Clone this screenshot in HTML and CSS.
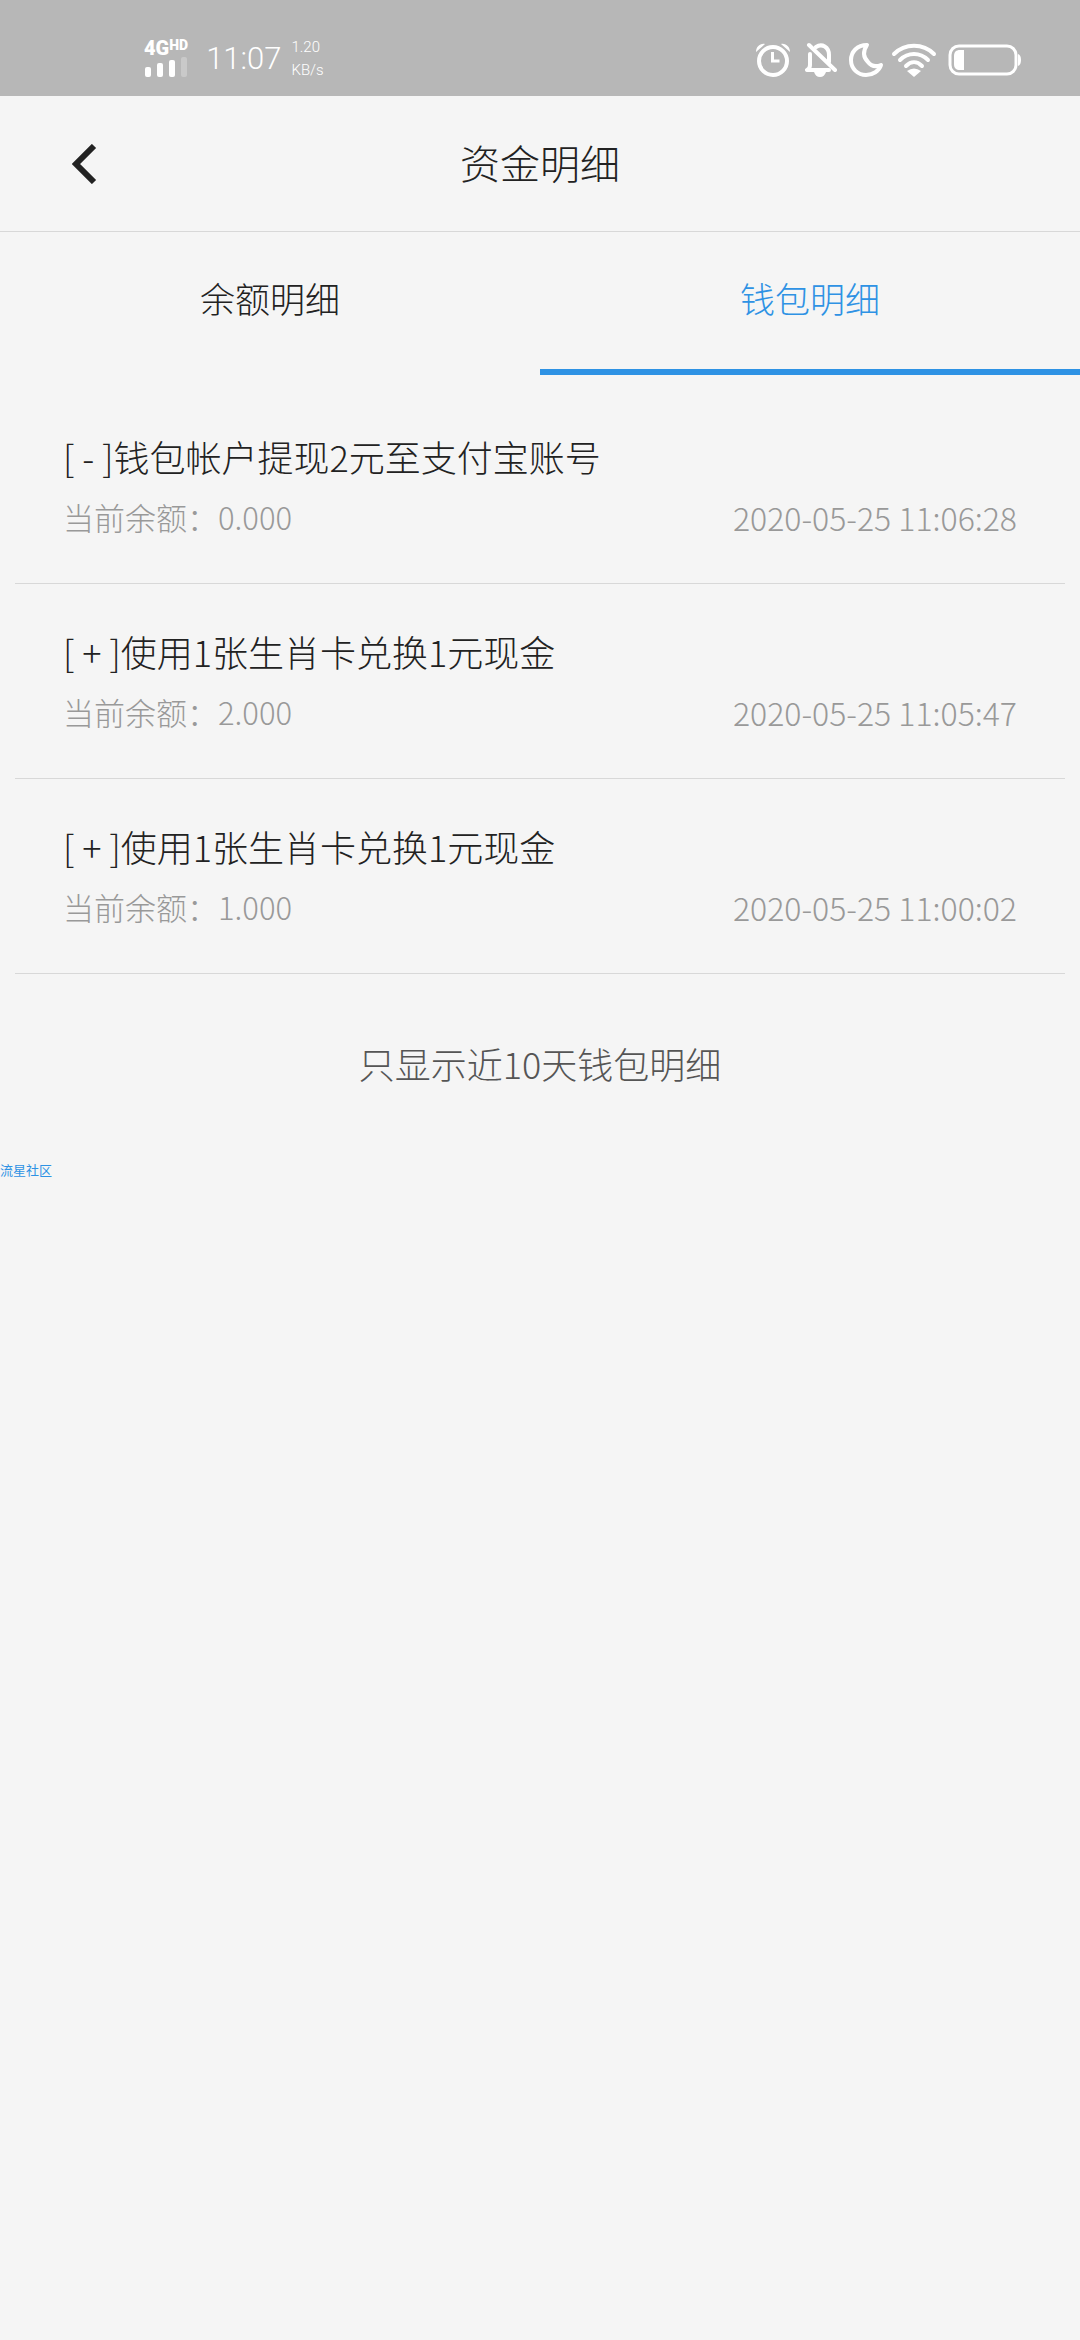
FILE: index.html
```html
<!DOCTYPE html>
<html lang="zh-CN">
<head>
    <meta charset="UTF-8">
    <meta name="viewport" content="width=device-width, initial-scale=1.0">
    <title>资金明细</title>
    <link rel="stylesheet" href="styles.css">
</head>
<body>
    <div class="status-bar">
        <div class="status-left">
            <div class="network">
                <div class="network-type">4G<sup>HD</sup></div>
                <svg class="signal" width="44" height="20" viewBox="0 0 44 20" fill="#fff">
                    <rect x="1" y="10" width="6" height="10" rx="2"/>
                    <rect x="13" y="6" width="6" height="14" rx="2"/>
                    <rect x="25" y="3" width="6" height="17" rx="2"/>
                    <rect x="37" y="0" width="6" height="20" rx="2" opacity="0.25"/>
                </svg>
            </div>
            <div class="clock">11:07</div>
            <div class="speed">
                <div>1.20</div>
                <div>KB/s</div>
            </div>
        </div>
        <div class="status-right">
            <svg width="36" height="36" viewBox="0 0 36 36" fill="none" stroke="#fff" stroke-width="4">
                <circle cx="18" cy="19" r="14"/>
                <path d="M17.500 10v9h7" stroke-width="3"/>
                <path d="M1 10C1 5 5 1 10 2L1 10zM35 10C35 5 31 1 26 2l9 8z" fill="#fff" stroke="none"/>
            </svg>
            <svg class="bell" width="32" height="36" viewBox="0 0 32 36" fill="none" stroke="#fff" stroke-width="4" stroke-linecap="round" stroke-linejoin="round">
                <path d="M11 5C17 1 24 5 24 13v7M5 12v11c0 3-1 4-3 5h22"/>
                <path d="M4 3l26 25"/>
                <path d="M9 30h12c-1 3-3 5-6 5s-5-2-6-5z" fill="#fff" stroke="none"/>
            </svg>
            <svg class="moon" width="36" height="36" viewBox="0 0 36 36" fill="none" stroke="#fff" stroke-width="4" stroke-linejoin="round">
                <path d="M19 3C9 3 3 10 3 18c0 9 7 15 15 15 7 0 13-4 15-10-5 2-10 1-13-3-5-5-5-11-1-17z"/>
            </svg>
            <svg class="wifi" width="46" height="34" viewBox="0 0 46 34" fill="none" stroke="#fff" stroke-width="4" stroke-linecap="round">
                <path d="M3 11C14 0 32 0 43 11M9 17c8-8 20-8 28 0M15 23c5-5 11-5 16 0"/>
                <path d="M16 28q7-5 14 0l-7 6z" fill="#fff" stroke="none"/>
            </svg>
            <svg class="battery" width="74" height="32" viewBox="0 0 74 32">
                <rect x="2" y="2" width="66" height="28" rx="9" fill="none" stroke="#fff" stroke-width="3"/>
                <path d="M16 6v20h-4c-4 0-6-2-6-6v-8c0-4 2-6 6-6z" fill="#fff"/>
                <path d="M70 10q3 1 3 6t-3 6z" fill="#fff"/>
            </svg>
        </div>
    </div>

    <header class="header">
        <button type="button" class="back" aria-label="返回">
            <svg width="26" height="40" viewBox="0 0 26 40" fill="none" stroke="#222" stroke-width="6">
                <path d="M22 2L4 20l18 18"/>
            </svg>
        </button>
        <h1>资金明细</h1>
    </header>

    <nav class="tabs">
        <a class="tab" href="#balance">余额明细</a>
        <a class="tab active" href="#wallet">钱包明细</a>
    </nav>

    <ul class="records">
        <li class="record">
            <div class="record-title">[ - ]钱包帐户提现2元至支付宝账号</div>
            <div class="record-info">
                <span>当前余额：0.000</span>
                <time>2020-05-25 11:06:28</time>
            </div>
        </li>
        <li class="record">
            <div class="record-title">[ + ]使用1张生肖卡兑换1元现金</div>
            <div class="record-info">
                <span>当前余额：2.000</span>
                <time>2020-05-25 11:05:47</time>
            </div>
        </li>
        <li class="record">
            <div class="record-title">[ + ]使用1张生肖卡兑换1元现金</div>
            <div class="record-info">
                <span>当前余额：1.000</span>
                <time>2020-05-25 11:00:02</time>
            </div>
        </li>
    </ul>

    <p class="tip">只显示近10天钱包明细</p>
    <a class="site-link" href="#">流星社区</a>
</body>
</html>
```
FILE: styles.css
```css
:root {
    --blue: #2e92e4;
    --bg: #f5f5f5;
    --text: #222;
    --text-secondary: #999;
    --line: #d8d8d8;
}

* {
    margin: 0;
    padding: 0;
    box-sizing: border-box;
}

body {
    background-color: var(--bg);
    color: var(--text);
    font-family: "Noto Sans CJK SC", sans-serif;
    font-weight: 300;
    min-height: 100vh;
}

a {
    text-decoration: none;
    color: inherit;
}

svg {
    display: block;
}

/* phone status bar */
.status-bar {
    display: flex;
    justify-content: space-between;
    align-items: center;
    height: 96px;
    padding: 24px 58px 0 144px;
    background-color: #b7b7b7;
    color: #fff;
    font-family: Roboto, sans-serif;
}

.status-left,
.status-right {
    display: flex;
    align-items: center;
}

.network {
    padding-bottom: 4px;
}

.network-type {
    display: flex;
    font-size: 20px;
    line-height: 18px;
    font-weight: 900;
}

.network-type sup {
    font-size: 14px;
    line-height: 12px;
}

.clock {
    margin-left: 18px;
    padding-bottom: 4px;
    font-size: 31px;
}

.speed {
    margin-left: 10px;
    padding-bottom: 2px;
    font-size: 15px;
    line-height: 23px;
}

.bell {
    margin-left: 14px;
}

.moon {
    margin-left: 11px;
}

.wifi {
    margin-left: 7px;
}

.battery {
    margin-left: 11px;
}

/* title bar */
.header {
    position: relative;
    display: flex;
    justify-content: center;
    align-items: center;
    height: 136px;
    border-bottom: 1px solid var(--line);
}

.header h1 {
    padding-bottom: 4px;
    font-size: 40px;
    font-weight: 300;
}

.back {
    position: absolute;
    left: 48px;
    padding: 24px;
    border: none;
    background: none;
    cursor: pointer;
}

.tabs {
    display: flex;
}

.tab {
    flex: 1;
    height: 143px;
    border-bottom: 6px solid transparent;
    font-size: 35px;
    line-height: 132px;
    text-align: center;
}

.tab.active {
    color: var(--blue);
    border-bottom-color: var(--blue);
}

/* record list */
.records {
    list-style: none;
    padding: 14px 15px 0;
}

.record {
    padding: 43px 48px 42px;
    border-bottom: 1px solid var(--line);
}

.record-title {
    font-size: 36px;
    line-height: 48px;
    margin-bottom: 13px;
}

.record-info {
    display: flex;
    justify-content: space-between;
    font-size: 31px;
    line-height: 48px;
    color: var(--text-secondary);
}

.record-info time {
    font-size: 32px;
}

.tip {
    padding: 65px 0 73px;
    font-size: 36px;
    line-height: 48px;
    text-align: center;
    color: #555;
}

.site-link {
    display: block;
    width: fit-content;
    font-size: 13px;
    font-weight: 400;
    line-height: 20px;
    color: var(--blue);
}
```
